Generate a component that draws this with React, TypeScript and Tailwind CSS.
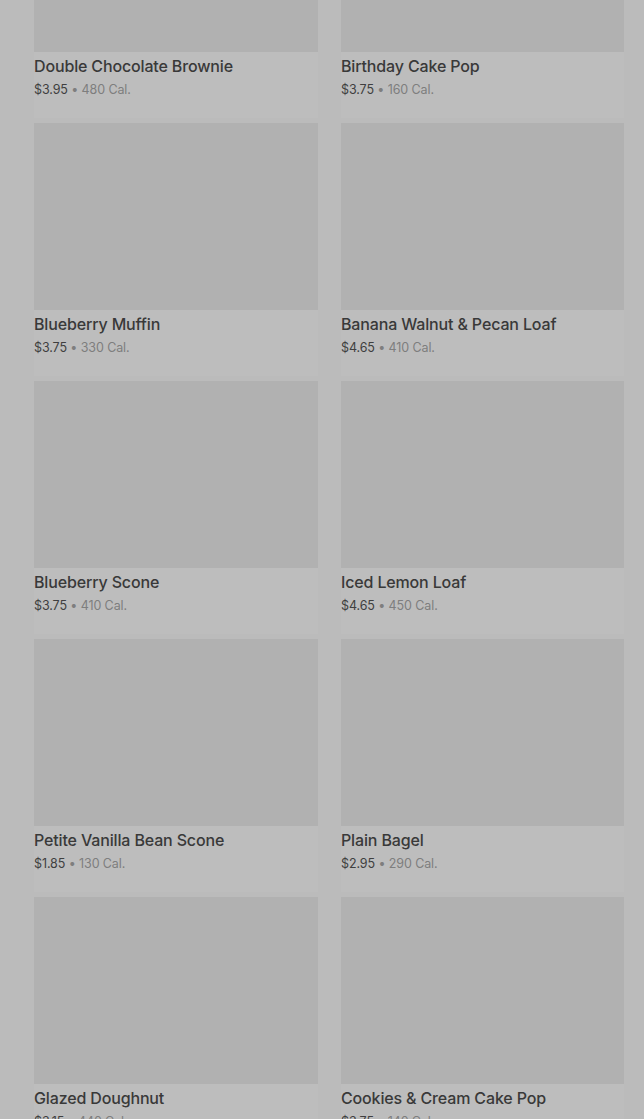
import React from "react";

const items: { name: string; price: string; cal: string }[] = [
  { name: "Double Chocolate Brownie", price: "$3.95", cal: "480 Cal." },
  { name: "Birthday Cake Pop", price: "$3.75", cal: "160 Cal." },
  { name: "Blueberry Muffin", price: "$3.75", cal: "330 Cal." },
  { name: "Banana Walnut & Pecan Loaf", price: "$4.65", cal: "410 Cal." },
  { name: "Blueberry Scone", price: "$3.75", cal: "410 Cal." },
  { name: "Iced Lemon Loaf", price: "$4.65", cal: "450 Cal." },
  { name: "Petite Vanilla Bean Scone", price: "$1.85", cal: "130 Cal." },
  { name: "Plain Bagel", price: "$2.95", cal: "290 Cal." },
  { name: "Glazed Doughnut", price: "$3.15", cal: "440 Cal." },
  { name: "Cookies & Cream Cake Pop", price: "$3.75", cal: "140 Cal." },
];

export default function App() {
  return (
    <div
      className="h-[1119px] overflow-hidden bg-[#bbbbbb]"
      style={{ fontFamily: "Inter, 'Noto Sans', sans-serif" }}
    >
      <div className="mt-[-135px] grid grid-cols-[284px_283px] gap-x-[23px] gap-y-[5px] pl-[34px]">
        {items.map((it) => (
          <div key={it.name} className="flex flex-col bg-[#bdbdbd] pb-[18px]">
            <div className="h-[187px] bg-[#b1b1b1]" />
            <div className="pt-[4px] text-[16px] font-medium leading-[20px] tracking-[-0.15px] text-[#393939]">
              {it.name}
            </div>
            <div className="mt-[4px] text-[12.5px] leading-[20px] tracking-[-0.1px]">
              <span className="text-[#3f3f3f]">{it.price}</span>
              <span className="text-[#7e7e7e]"> • {it.cal}</span>
            </div>
          </div>
        ))}
      </div>
    </div>
  );
}
